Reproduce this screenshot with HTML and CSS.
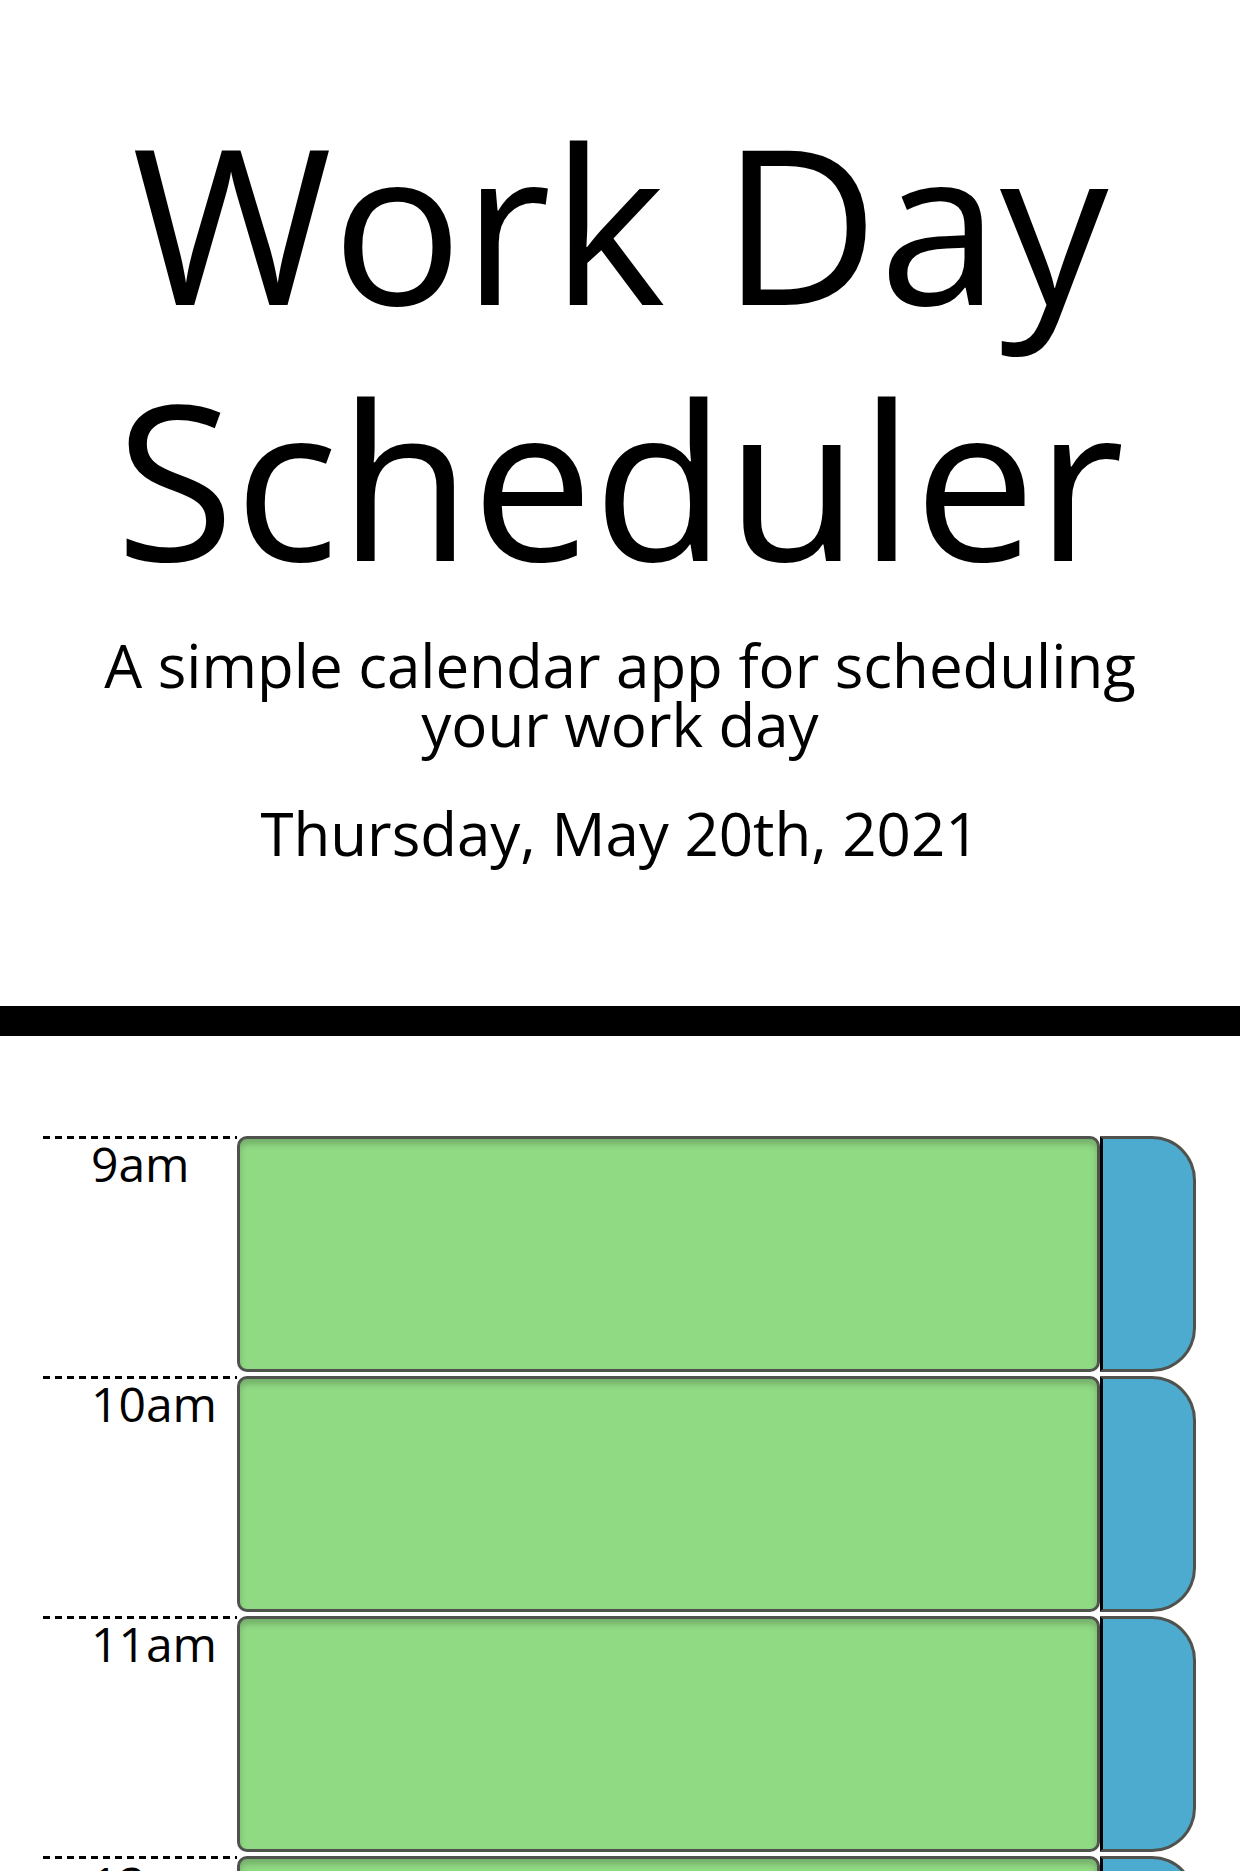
FILE: index.html
```html
<!DOCTYPE html>
<html lang="en">
<head>
<meta charset="utf-8">
<title>Work Day Scheduler</title>
<link rel="stylesheet" href="styles.css">
</head>
<body>
<header class="jumbotron">
  <h1 class="title">Work Day Scheduler</h1>
  <p class="lead">A simple calendar app for scheduling<br>your work day</p>
  <p class="current-day">Thursday, May 20th, 2021</p>
</header>
<div class="divider"></div>
<main class="schedule">
  <div class="time-block">
    <div class="hour">9am</div>
    <textarea class="description future"></textarea>
    <button class="save-btn" aria-label="save"></button>
  </div>
  <div class="time-block">
    <div class="hour">10am</div>
    <textarea class="description future"></textarea>
    <button class="save-btn" aria-label="save"></button>
  </div>
  <div class="time-block">
    <div class="hour">11am</div>
    <textarea class="description future"></textarea>
    <button class="save-btn" aria-label="save"></button>
  </div>
  <div class="time-block">
    <div class="hour">12pm</div>
    <textarea class="description future"></textarea>
    <button class="save-btn" aria-label="save"></button>
  </div>
</main>
</body>
</html>
```
FILE: styles.css
```css
html, body {
  margin: 0;
  padding: 0;
  background: #ffffff;
  font-family: "Open Sans", "Noto Sans", sans-serif;
  color: #000000;
}

.jumbotron {
  text-align: center;
  padding-top: 93px;
}

.title {
  margin: 0;
  font-size: 217px;
  font-weight: 400;
  line-height: 256px;
}

.lead {
  margin: 31px 0 0;
  font-size: 60px;
  line-height: 59px;
  font-weight: 400;
}

.current-day {
  margin: 50px 0 0;
  font-size: 60px;
  line-height: 59px;
}

.divider {
  margin-top: 143px;
  height: 30px;
  background: #000000;
}

.schedule {
  margin: 100px 44px 0 43px;
}

.time-block {
  display: grid;
  grid-template-columns: 194px 1fr 96px;
  height: 240px;
}

.hour {
  padding-top: 3px;
  padding-left: 48px;
  font-size: 48px;
  line-height: 49px;
  background-image: repeating-linear-gradient(to right, #000000 0, #000000 7px, transparent 7px, transparent 12px);
  background-size: 100% 3px;
  background-repeat: no-repeat;
  background-position: 0 0;
}

.description {
  box-sizing: border-box;
  height: 236px;
  margin: 0;
  border: 3px solid #4f524d;
  border-radius: 10px;
  background: #91da84;
  box-shadow: inset 0 5px 6px rgba(0, 0, 0, 0.2);
  resize: none;
  font-family: inherit;
  padding: 0;
}

.save-btn {
  box-sizing: border-box;
  height: 236px;
  margin: 0;
  padding: 0;
  border: 3px solid #4f524d;
  border-left: 3px solid #000000;
  border-radius: 0 44px 44px 0;
  background: #4eabd0;
}
```
